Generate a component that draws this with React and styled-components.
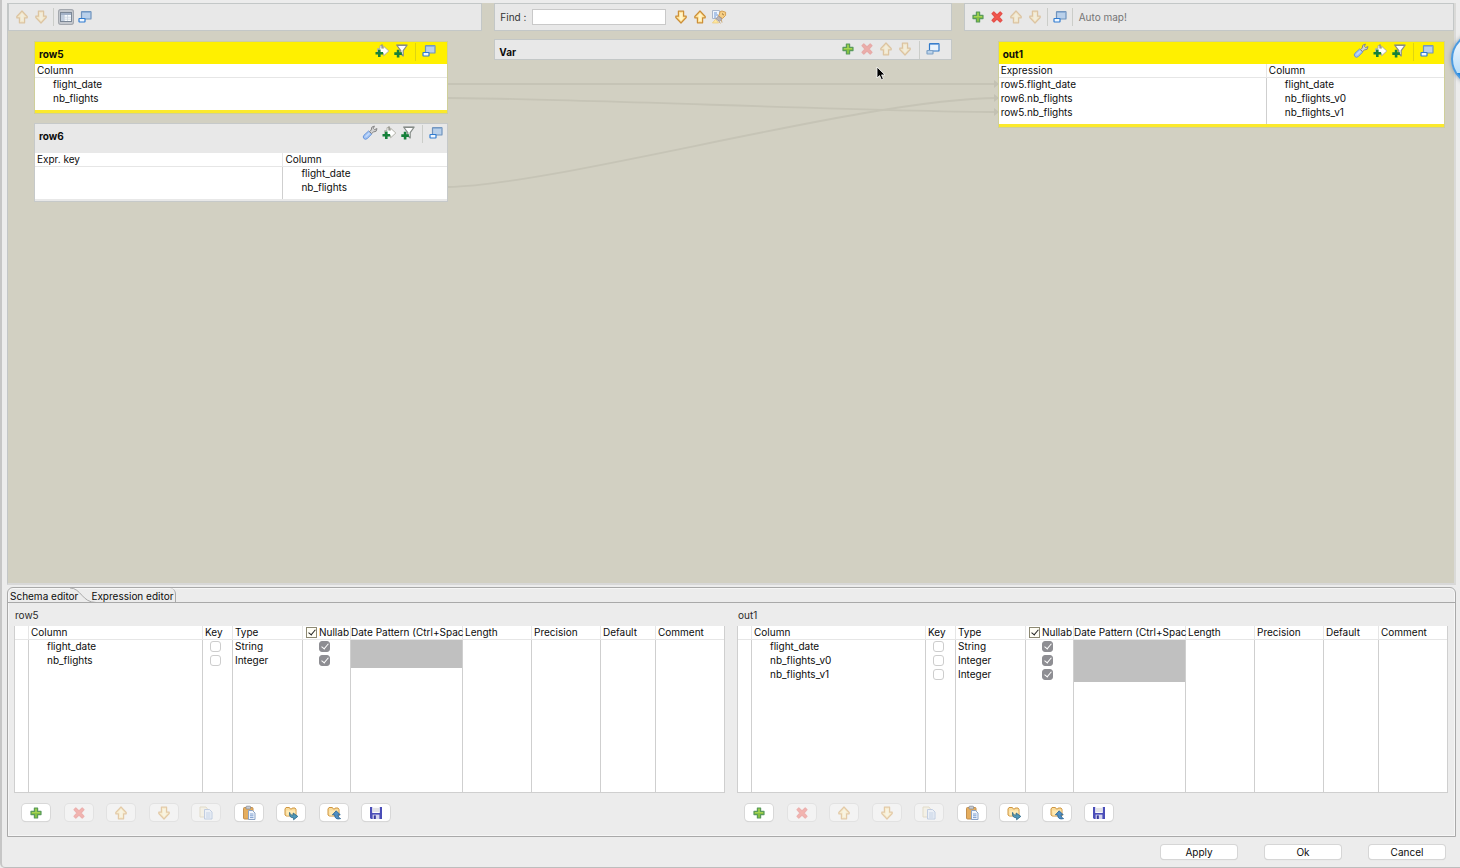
import React from "react";
import styled, { createGlobalStyle, css } from "styled-components";

const GlobalStyle = createGlobalStyle`
  *, *::before, *::after { box-sizing: border-box; }
  body { margin: 0; background: #ececec; }
  body, button, input, table {
    font-family: Inter, "Liberation Sans", sans-serif;
    font-size: 10px;
    line-height: 14px;
    color: #0c0c0c;
  }
`;

/* ---------- icons ---------- */

const Icon = ({ children, faded }) => (
  <svg width="16" height="16" viewBox="0 0 16 16" opacity={faded ? 0.4 : 1} aria-hidden="true">
    {children}
  </svg>
);

const UpIcon = ({ faded }) => (
  <Icon faded={faded}>
    <path d="M8 2 L13.2 7.5 V8.8 H10.6 V13.8 H5.4 V8.8 H2.8 V7.5 Z" fill="#ffe39a" stroke="#cc8f38" strokeWidth="1.2" strokeLinejoin="round" />
    <path d="M8 4 L10.8 7.4 H9.4 V12 H7 V7.4 H5.6 Z" fill="#fff4cc" />
  </Icon>
);

const DownIcon = ({ faded }) => (
  <Icon faded={faded}>
    <path d="M8 14 L13.2 8.5 V7.2 H10.6 V2.2 H5.4 V7.2 H2.8 V8.5 Z" fill="#ffe39a" stroke="#cc8f38" strokeWidth="1.2" strokeLinejoin="round" />
    <path d="M8 12 L10.8 8.6 H9.4 V4 H7 V8.6 H5.6 Z" fill="#fff4cc" />
  </Icon>
);

const PlusIcon = () => (
  <Icon>
    <path d="M6.4 3 H9.6 V6.4 H13 V9.6 H9.6 V13 H6.4 V9.6 H3 V6.4 H6.4 Z" fill="#86c240" stroke="#5a9a5c" strokeWidth="1.2" strokeLinejoin="round" />
    <path d="M8 4 V8 M4 7.6 H12" stroke="#a9d657" />
  </Icon>
);

const CrossIcon = ({ faded }) => (
  <Icon faded={faded}>
    <path d="M3 4.6 L4.8 3 L8 6 L11.2 3 L13 4.6 L10 8 L13 11.4 L11.2 13 L8 10 L4.8 13 L3 11.4 L6 8 Z" fill="#f3574c" stroke="#e4504a" strokeWidth="1.2" strokeLinejoin="round" />
  </Icon>
);

const RestoreIcon = ({ active }) => (
  <Icon>
    <rect x="4.5" y="2.5" width="9.5" height="7.5" rx="0.6" fill={active ? "#eaf3fc" : "#b9d0ea"} stroke={active ? "#2f78c8" : "#6f93bd"} strokeWidth="1.2" />
    <path d="M5 3.2 H13.5" stroke={active ? "#4a8cd6" : "#7fa2cc"} />
    <rect x="2" y="9.5" width="6" height="3.5" rx="0.5" fill={active ? "#bcd3ea" : "#f0f7ff"} stroke={active ? "#7fa2c6" : "#2f7bd0"} strokeWidth="1.2" />
  </Icon>
);

const LayoutIcon = () => (
  <Icon>
    <rect x="2.5" y="3.5" width="11" height="9" fill="#f6fafd" stroke="#7b8796" />
    <rect x="3" y="4" width="10" height="2" fill="#a3b2c8" />
    <path d="M3 6 H6 V12 H3 Z" fill="#c3cfdf" />
    <path d="M6.5 6 V12 M9.5 6 V12 M6 8.2 H13 M6 10.2 H13" stroke="#c6d0dc" strokeWidth="0.7" />
  </Icon>
);

const WrenchIcon = () => (
  <Icon>
    <path d="M2.2 13.8 Q0.2 12 2 10.2 L6.6 6 L9.8 9 L5.4 13.4 Q3.6 15 2.2 13.8 Z" fill="#a3c4f4" stroke="#5f8fd8" strokeWidth="0.9" />
    <path d="M3.6 11.8 L7.6 8" stroke="#c4dafa" strokeWidth="1.2" />
    <path d="M7.6 6.6 L9.2 5 Q8.8 1.4 12.4 1 L11.4 3.4 L12.6 4.6 L15 3.6 Q15 7.2 11.4 7 L9.6 8.6 Z" fill="#d2d2d2" stroke="#868686" strokeWidth="1" />
  </Icon>
);

const AddArrowIcon = () => (
  <Icon>
    <path d="M6 2.6 H8.6 V5.2 H9.6 V3.2 L14.8 8 L9.6 12.8 V10.6 H3.6 V5.6 H6 Z" fill="#fff" stroke="#aaaaa0" strokeWidth="0.9" />
    <path d="M8 1.2 V5.6" stroke="#8c8c84" strokeWidth="1.2" />
    <path d="M5.3 6.4 V14 M1.5 10.2 H9.1" stroke="#16803a" strokeWidth="2.6" />
  </Icon>
);

const AddFilterIcon = () => (
  <Icon>
    <path d="M3.6 2 H14.2 L10.2 7.6 V13 L7.8 10.8 V7.6 Z" fill="#fff" stroke="#868c88" strokeWidth="1.2" strokeLinejoin="round" />
    <path d="M4 2.4 H13.8" stroke="#868c88" strokeWidth="1.2" />
    <path d="M5.1 6.8 V14.4 M1.3 10.6 H8.9" stroke="#16803a" strokeWidth="2.6" />
  </Icon>
);

const HighlightIcon = () => (
  <Icon>
    <path d="M1.5 1.5 H8.5 V9.5 H1.5 Z" fill="#eef4fd" stroke="#a9b6cb" />
    <path d="M3 4 H6 M3 6 H7 M3 8 H5" stroke="#6d97d4" />
    <path d="M8.6 4.4 Q8.6 2 11 2 L14.6 3.2 V6.4 L11.4 9.6 L7.6 7 Z" fill="#f7cf85" stroke="#d29a4b" strokeWidth="0.9" />
    <path d="M11 4.6 L12.8 6" stroke="#8d6a3a" />
    <path d="M7.4 7 L11 9.8 L8.4 12.4 L5 9.8 Z" fill="#b9b4b4" stroke="#948c90" strokeWidth="0.8" />
    <path d="M4.6 10.2 L7.6 14 H1.4 Z" fill="#ffe9a0" stroke="#e9c777" strokeWidth="0.7" />
    <path d="M8 12.6 L9.4 14.4 M10.4 11 L11 13.6" stroke="#c9a878" />
  </Icon>
);

const CopyIcon = ({ faded }) => (
  <Icon faded={faded}>
    <path d="M2 2 H8 L9.5 4 V12 H2 Z" fill="#f4ecd4" stroke="#c9b98c" />
    <path d="M6.5 4.5 H11.5 L14 7 V14 H6.5 Z" fill="#e4eefb" stroke="#7797c8" />
    <path d="M8 8 H12.5 M8 10 H12.5 M8 12 H12.5" stroke="#7fa0d4" />
  </Icon>
);

const PasteIcon = () => (
  <Icon>
    <rect x="2.5" y="2.5" width="9.5" height="11.5" rx="1" fill="#e6ae5e" stroke="#c29050" />
    <rect x="5" y="1.2" width="4.6" height="2.8" rx="0.8" fill="#c8ccd2" stroke="#858b94" strokeWidth="0.8" />
    <path d="M7.5 5.5 H11.5 L14 8 V14.5 H7.5 Z" fill="#f2f7fe" stroke="#8ba3c6" />
    <path d="M9 9 H12.5 M9 10.8 H12.5 M9 12.6 H12.5" stroke="#6f94cc" strokeWidth="0.9" />
  </Icon>
);

const Folder = () => (
  <>
    <path d="M2 4 L3 2.5 H6.4 L7.4 4 H8.6 L9.2 3 H12 L13 4.4 V11 H3.4 L2 10 Z" fill="#f9dc9c" stroke="#cf9640" strokeLinejoin="round" />
    <path d="M3.4 5.6 H12.4 V10.6 H3.8 Z" fill="#ffeab4" />
  </>
);

const ImportIcon = () => (
  <Icon>
    <Folder />
    <path d="M6.6 7.4 Q6.8 10.6 10.2 10.2 V8 L14.8 11.4 L10.6 14.8 V12.8 Q5.6 12.8 6.6 7.4 Z" fill="#4f97b9" stroke="#276484" strokeWidth="0.8" strokeLinejoin="round" />
  </Icon>
);

const ExportIcon = () => (
  <Icon>
    <Folder />
    <path d="M10.2 5.8 L14.2 9.8 H12 Q11.8 12.6 14.6 13.6 Q8.8 15.2 8.6 9.8 H6.4 Z" fill="#4f8fc4" stroke="#255f92" strokeWidth="0.8" strokeLinejoin="round" />
  </Icon>
);

const SaveIcon = () => (
  <Icon>
    <path d="M2 2 H14 V14 H3 L2 13 Z" fill="#4a4db8" />
    <rect x="4.2" y="1.6" width="7.6" height="6.4" fill="#fafafc" />
    <path d="M5 4 H11 M5 6 H11" stroke="#c9c9cf" />
    <rect x="4.6" y="9.6" width="6.8" height="4.4" fill="#d5d5ee" />
    <rect x="5.8" y="10.4" width="2" height="3.6" fill="#35379c" />
  </Icon>
);

/* ---------- window ---------- */

const Window = styled.main`
  position: relative;
  display: flex;
  flex-direction: column;
  min-height: 100vh;
  overflow: hidden;
  padding: 3px 4px 8px 6px;
  background: #ececec;
  border-left: 2px solid #c6c6c6;
  border-bottom: 1px solid #bdbdbd;
  border-bottom-left-radius: 5px;
`;

const MapArea = styled.section`
  position: relative;
  flex: 1;
  margin-left: -1px;
  background: #d2d0c2;
  border: 1px solid #c3c6c6;
  border-top: 0;
  border-right: 2px solid #dadad8;
  border-bottom: 2px solid #d8d8d8;
`;

const Columns = styled.div`
  display: grid;
  grid-template-columns: 474fr 457fr 490fr;
  column-gap: 12px;
`;

const Zone = styled.div`
  display: flex;
  flex-direction: column;
  gap: 10px;
`;

const Bar = styled.div`
  display: flex;
  align-items: center;
  gap: 3px;
  height: 28px;
  padding: 0 6px 0 5px;
  background: #e8e8e8;
  border: 1px solid #c3c7c7;
`;

const Divider = styled.span`
  flex: none;
  width: 1px;
  height: 18px;
  margin: ${(p) => (p.$inHeader ? "0 2px 0 3px" : "0 1px")};
  background: rgba(90, 100, 80, 0.2);
`;

const ToolButton = styled.button`
  display: flex;
  flex: none;
  align-items: center;
  justify-content: center;
  width: 16px;
  height: 16px;
  padding: 0;
  border: 0;
  border-radius: 3px;
  background: none;
  ${(p) =>
    p.$pressed &&
    css`
      background: #c4c8ce;
      box-shadow: inset 0 0 0 1px #a4a8ae;
    `}
`;

const FindLabel = styled.label`
  color: #333;
`;

const FindInput = styled.input`
  width: 134px;
  height: 16px;
  margin: 0 4px 0 3px;
  padding: 0 3px;
  background: #fff;
  border: 1px solid #c9c9c9;
  outline: none;
`;

const AutoMap = styled.button`
  padding: 0 2px;
  border: 0;
  background: none;
  color: #757575;
`;

const Stack = styled.div`
  display: flex;
  flex-direction: column;
  gap: 9px;
  padding: ${(p) => (p.$side === "left" ? "0 34px 0 26px" : "0 9px 0 34px")};
`;

const Card = styled.article`
  background: #fff;
  border: 1px solid ${(p) => (p.$active ? "#cfcf9a" : "#c6c9c9")};
`;

const CardHeader = styled.header`
  display: flex;
  align-items: flex-start;
  gap: 3px;
  height: ${(p) => p.$height || 22}px;
  padding: 1px ${(p) => p.$end || 9}px 0 4px;
  background: ${(p) => (p.$active ? "#fff000" : "#e8e8e8")};
`;

const CardTitle = styled.h2`
  flex: 1;
  margin: 4px 0 0;
  font-size: 10px;
  line-height: 14px;
  font-weight: 700;
`;

const VarCard = styled.article`
  margin-top: -2px;
  border: 1px solid #c3c7c7;
`;

const MapTable = styled.table`
  width: 100%;
  table-layout: fixed;
  border-collapse: separate;
  border-spacing: 0;
  background: #fff;

  th {
    height: 14px;
    padding: 0 2px;
    font-weight: 400;
    text-align: left;
    line-height: 13px;
    border-bottom: 1px solid #e6e6e6;
  }
  td {
    height: 14px;
    padding: 0 2px;
    line-height: 13px;
    vertical-align: top;
  }
  tr:last-child td { height: 18px; }
  td:last-child { padding-left: 18px; }
  td + td { border-left: 1px solid #cfcfcf; }
  th + th { border-left: 1px solid #e6e6e6; }
`;

const Stripe = styled.div`
  height: ${(p) => (p.$active ? 3 : 2)}px;
  background: ${(p) => (p.$active ? "#fbe92c" : "#e8e8e8")};
`;

const Links = styled.svg`
  position: absolute;
  top: 0;
  left: 0;
  width: 100%;
  height: 200px;
  pointer-events: none;
`;

const Cursor = styled.svg`
  position: absolute;
  left: 60%;
  top: 63px;
`;

const Orb = styled.div`
  position: absolute;
  top: 32px;
  right: -45px;
  width: 54px;
  height: 54px;
  border: 2px solid #4b9be0;
  border-radius: 50%;
  background: linear-gradient(#eaf4fd 0 20%, #b9def9 78%, #1f86e0 79%, #4aa7ee);
  box-shadow: 0 0 4px #8d9aa5;
`;

/* ---------- editors ---------- */

const EditorPanel = styled.section`
  margin: 2px 0 0 -1px;
  border: 1px solid #a9a9a9;
  border-radius: 6px 6px 0 0;
  box-shadow: inset 0 0 0 1px #f6f6f6;
`;

const TabRow = styled.div`
  display: flex;
  height: 15px;
  border-bottom: 1px solid #a9a9a9;
`;

const Tab = styled.button`
  padding: 1px 2px 0;
  border: 0;
  background: none;
  line-height: 14px;
  white-space: nowrap;
  ${(p) =>
    !p.$selected &&
    css`
      border-right: 1px solid #a9a9a9;
      border-top-right-radius: 6px;
    `}
`;

const TabCurve = styled.svg`
  flex: none;
  margin: 0 -7px 0 -10px;
`;

const Editors = styled.div`
  display: grid;
  grid-template-columns: 1fr 1fr;
  column-gap: 12px;
  padding: 5px 7px 15px 6px;
`;

const EditorTitle = styled.h3`
  margin: 0 0 4px;
  padding-left: 1px;
  font-size: 10px;
  line-height: 14px;
  font-weight: 400;
  color: #2a2a2a;
`;

const TableFrame = styled.div`
  height: 167px;
  background: #fff;
  border: 1px solid #cfcfcf;
  border-top: 0;
`;

const SchemaTable = styled.table`
  width: 100%;
  height: 100%;
  table-layout: fixed;
  border-collapse: separate;
  border-spacing: 0;

  th, td {
    padding: 0 0 0 2px;
    text-align: left;
    font-weight: 400;
    line-height: 13px;
    white-space: nowrap;
  }
  th {
    height: 14px;
    border-bottom: 1px solid #e6e6e6;
  }
  th + th { border-left: 1px solid #e6e6e6; }
  td + td { border-left: 1px solid #cfcfcf; }
`;

const Col = styled.col`
  width: ${(p) => (p.$w ? `${p.$w}px` : "auto")};
`;

const Row = styled.tr`
  height: 14px;
  td { height: 14px; vertical-align: top; }
`;

const TightHeading = styled.th`
  && { padding-left: 0; }
`;

const NameCell = styled.td`
  && { padding-left: 18px; }
`;

const CheckCell = styled.td`
  && {
    padding-top: 1px;
    padding-left: ${(p) => p.$indent}px;
  }
`;

const ShadedCell = styled.td`
  background: #c0c0c0;
`;

const Check = styled.input`
  appearance: none;
  display: block;
  position: relative;
  flex: none;
  width: 11px;
  height: 11px;
  margin: 0;
  border: 1px solid #cdcdcd;
  border-radius: 3px;
  background: #fff;

  &:checked {
    background: #8e8e93;
    border-color: #8e8e93;
  }
  &:checked::after {
    content: "";
    position: absolute;
    left: 3px;
    top: 0;
    width: 4px;
    height: 7px;
    border: solid #fff;
    border-width: 0 1px 1px 0;
    transform: rotate(40deg);
  }
  ${(p) =>
    p.$classic &&
    css`
      border-radius: 0;
      &:checked { background: #fffef6; border-color: #8c8872; }
      &:checked::after { border-color: #222; }
    `}
`;

const NullLabel = styled.label`
  display: flex;
  align-items: center;
  gap: 2px;
  height: 13px;
  padding-left: 1px;
`;

const Actions = styled.div`
  display: flex;
  justify-content: space-between;
  width: 368px;
  margin: 11px 0 0 8px;
`;

const ActionButton = styled.button`
  display: flex;
  align-items: center;
  justify-content: center;
  width: 28px;
  height: 17px;
  padding: 0;
  border: 0;
  border-radius: 4px;
  background: ${(p) => (p.disabled ? "#f3f3f3" : "#fff")};
  box-shadow: 0 0 0 1px ${(p) => (p.disabled ? "#e2e2e2" : "#d8d8d8")}, 0 1px 1px rgba(0, 0, 0, ${(p) => (p.disabled ? 0.03 : 0.15)});
`;

const Footer = styled.footer`
  display: flex;
  justify-content: flex-end;
  gap: 28px;
  padding: 8px 11px 0 0;
`;

const DialogButton = styled.button`
  width: 76px;
  height: 14px;
  padding: 0;
  border: 0;
  border-radius: 3px;
  background: #fff;
  box-shadow: 0 0 0 1px #d6d6d6, 0 1px 1px rgba(0, 0, 0, 0.15);
  line-height: 14px;
`;

/* ---------- composition ---------- */

const Tool = ({ label, children, ...rest }) => (
  <ToolButton type="button" aria-label={label} {...rest}>
    {children}
  </ToolButton>
);

const MapCard = ({ name, active, wrench, height, end, headings, rows }) => (
  <Card $active={active}>
    <CardHeader $active={active} $height={height} $end={end}>
      <CardTitle>{name}</CardTitle>
      {wrench && <Tool label="Settings"><WrenchIcon /></Tool>}
      <Tool label="Add mapping"><AddArrowIcon /></Tool>
      <Tool label="Add filter"><AddFilterIcon /></Tool>
      <Divider $inHeader />
      <Tool label="Minimize"><RestoreIcon /></Tool>
    </CardHeader>
    <MapTable>
      <colgroup>
        {headings.length > 1 && <col width="60%" />}
        <col />
      </colgroup>
      <thead>
        <tr>{headings.map((h) => <th key={h}>{h}</th>)}</tr>
      </thead>
      <tbody>
        {rows.map((cells, i) => (
          <tr key={i}>{cells.map((c, j) => <td key={j}>{c}</td>)}</tr>
        ))}
      </tbody>
    </MapTable>
    <Stripe $active={active} />
  </Card>
);

const actions = [
  { label: "Add", icon: <PlusIcon /> },
  { label: "Remove", icon: <CrossIcon faded />, disabled: true },
  { label: "Move up", icon: <UpIcon faded />, disabled: true },
  { label: "Move down", icon: <DownIcon faded />, disabled: true },
  { label: "Copy", icon: <CopyIcon faded />, disabled: true },
  { label: "Paste", icon: <PasteIcon /> },
  { label: "Import", icon: <ImportIcon /> },
  { label: "Export", icon: <ExportIcon /> },
  { label: "Save", icon: <SaveIcon /> },
];

const widths = [13, 174, 30, 70, 48, 112, 69, 69, 55, 0];

const SchemaEditor = ({ name, rows }) => (
  <div>
    <EditorTitle>{name}</EditorTitle>
    <TableFrame>
      <SchemaTable>
        <colgroup>{widths.map((w, i) => <Col key={i} $w={w} />)}</colgroup>
        <thead>
          <tr>
            <th />
            <th>Column</th>
            <th>Key</th>
            <th>Type</th>
            <th>
              <NullLabel>
                <Check type="checkbox" defaultChecked $classic />
                Nullab
              </NullLabel>
            </th>
            <TightHeading>Date Pattern (Ctrl+Spac</TightHeading>
            <th>Length</th>
            <th>Precision</th>
            <th>Default</th>
            <th>Comment</th>
          </tr>
        </thead>
        <tbody>
          {rows.map(([column, type]) => (
            <Row key={column}>
              <td />
              <NameCell>{column}</NameCell>
              <CheckCell $indent={7}><Check type="checkbox" aria-label={`${column} key`} /></CheckCell>
              <td>{type}</td>
              <CheckCell $indent={16}><Check type="checkbox" defaultChecked aria-label={`${column} nullable`} /></CheckCell>
              <ShadedCell />
              <td /><td /><td /><td />
            </Row>
          ))}
          <tr>{widths.map((_, i) => <td key={i} />)}</tr>
        </tbody>
      </SchemaTable>
    </TableFrame>
    <Actions>
      {actions.map(({ label, icon, disabled }) => (
        <ActionButton key={label} type="button" aria-label={label} disabled={disabled}>{icon}</ActionButton>
      ))}
    </Actions>
  </div>
);

export default function App() {
  return (
    <>
      <GlobalStyle />
      <Window>
        <MapArea>
          <Columns>
            <Zone>
              <Bar>
                <Tool label="Move up"><UpIcon faded /></Tool>
                <Tool label="Move down"><DownIcon faded /></Tool>
                <Divider />
                <Tool label="Toggle layout" $pressed><LayoutIcon /></Tool>
                <Tool label="Minimize"><RestoreIcon /></Tool>
              </Bar>
              <Stack $side="left">
                <MapCard name="row5" active end={10} headings={["Column"]} rows={[["flight_date"], ["nb_flights"]]} />
                <MapCard
                  name="row6"
                  wrench
                  height={29}
                  end={3}
                  headings={["Expr. key", "Column"]}
                  rows={[["", "flight_date"], ["", "nb_flights"]]}
                />
              </Stack>
            </Zone>
            <Zone>
              <Bar>
                <FindLabel htmlFor="find">Find :</FindLabel>
                <FindInput id="find" type="text" />
                <Tool label="Find next"><DownIcon /></Tool>
                <Tool label="Find previous"><UpIcon /></Tool>
                <Tool label="Highlight"><HighlightIcon /></Tool>
              </Bar>
              <VarCard>
                <CardHeader $height={19} $end={10}>
                  <CardTitle>Var</CardTitle>
                  <Tool label="Add variable"><PlusIcon /></Tool>
                  <Tool label="Remove variable"><CrossIcon faded /></Tool>
                  <Tool label="Move up"><UpIcon faded /></Tool>
                  <Tool label="Move down"><DownIcon faded /></Tool>
                  <Divider $inHeader />
                  <Tool label="Minimize"><RestoreIcon active /></Tool>
                </CardHeader>
              </VarCard>
            </Zone>
            <Zone>
              <Bar>
                <Tool label="Add output"><PlusIcon /></Tool>
                <Tool label="Remove output"><CrossIcon /></Tool>
                <Tool label="Move up"><UpIcon faded /></Tool>
                <Tool label="Move down"><DownIcon faded /></Tool>
                <Divider />
                <Tool label="Minimize"><RestoreIcon /></Tool>
                <Divider />
                <AutoMap type="button">Auto map!</AutoMap>
              </Bar>
              <Stack>
                <MapCard
                  name="out1"
                  active
                  wrench
                  headings={["Expression", "Column"]}
                  rows={[
                    ["row5.flight_date", "flight_date"],
                    ["row6.nb_flights", "nb_flights_v0"],
                    ["row5.nb_flights", "nb_flights_v1"],
                  ]}
                />
              </Stack>
            </Zone>
          </Columns>
          <Links viewBox="0 0 1446 200" preserveAspectRatio="none" fill="none" stroke="#c6c4b6" strokeWidth="1.8">
            <path d="M440 81 H990" />
            <path d="M440 95 C540 95 880 109 990 109" />
            <path d="M440 184 C550 182 860 95 990 95" />
            <path d="M986 77 L991 81 L986 85 Z M986 91 L991 95 L986 99 Z M986 105 L991 109 L986 113 Z" fill="#c3c1b3" stroke="none" />
          </Links>
          <Cursor width="12" height="16" viewBox="0 0 12 16" aria-hidden="true">
            <path d="M1 1 V12 L3.6 9.6 L5.4 13.8 L7.4 13 L5.6 8.9 H9 Z" fill="#000" stroke="#fff" strokeWidth="0.8" />
          </Cursor>
        </MapArea>

        <EditorPanel>
          <TabRow role="tablist">
            <Tab type="button" role="tab" aria-selected="true" $selected>Schema editor</Tab>
            <TabCurve width="26" height="15" viewBox="0 0 26 15" fill="none" stroke="#a9a9a9" aria-hidden="true">
              <path d="M0 0 C11 0 12 14.5 26 14.5" />
            </TabCurve>
            <Tab type="button" role="tab" aria-selected="false">Expression editor</Tab>
          </TabRow>
          <Editors>
            <SchemaEditor name="row5" rows={[["flight_date", "String"], ["nb_flights", "Integer"]]} />
            <SchemaEditor
              name="out1"
              rows={[["flight_date", "String"], ["nb_flights_v0", "Integer"], ["nb_flights_v1", "Integer"]]}
            />
          </Editors>
        </EditorPanel>

        <Footer>
          <DialogButton type="button">Apply</DialogButton>
          <DialogButton type="button">Ok</DialogButton>
          <DialogButton type="button">Cancel</DialogButton>
        </Footer>
        <Orb />
      </Window>
    </>
  );
}
